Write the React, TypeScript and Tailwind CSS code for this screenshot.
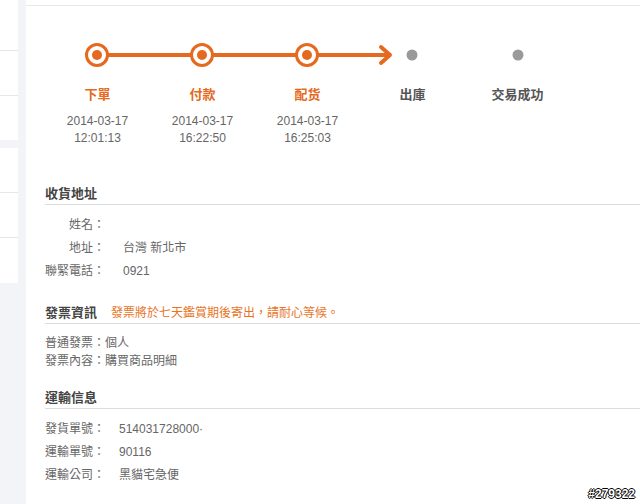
const ORANGE = "#e5691e";

const steps = [
  { label: "下單", date: "2014-03-17", time: "12:01:13", done: true },
  { label: "付款", date: "2014-03-17", time: "16:22:50", done: true },
  { label: "配货", date: "2014-03-17", time: "16:25:03", done: true },
  { label: "出庫", done: false },
  { label: "交易成功", done: false },
];

const address = [
  { k: "姓名：", v: "" },
  { k: "地址：", v: "台灣 新北市" },
  { k: "聯緊電話：", v: "0921" },
];

const shipping = [
  { k: "發貨單號：", v: "514031728000·" },
  { k: "運輸單號：", v: "90116" },
  { k: "運輸公司：", v: "黑貓宅急便" },
];

function Track() {
  return (
    <svg width="540" height="26" viewBox="0 0 540 26" className="block">
      <line x1="52" y1="13" x2="343" y2="13" stroke={ORANGE} strokeWidth="4" />
      <polyline
        points="336,5 345,13 336,21"
        fill="none"
        stroke={ORANGE}
        strokeWidth="4"
        strokeLinecap="round"
        strokeLinejoin="round"
      />
      {[52, 157, 262].map((cx) => (
        <g key={cx}>
          <circle cx={cx} cy="13" r="10.5" fill="#fff" stroke={ORANGE} strokeWidth="3" />
          <circle cx={cx} cy="13" r="5" fill={ORANGE} />
        </g>
      ))}
      {[367, 473].map((cx) => (
        <circle key={cx} cx={cx} cy="13" r="5.5" fill="#9a9a9a" />
      ))}
    </svg>
  );
}

function Heading({ title, note }: { title: string; note?: string }) {
  return (
    <div className="flex items-center gap-[14px] border-b border-[#dcdcdc] pb-[1px] leading-[18px]">
      <span className="text-[13px] font-bold text-[#444]">{title}</span>
      {note && <span className="text-[12px] text-[#e8741f]">{note}</span>}
    </div>
  );
}

export default function App() {
  return (
    <div
      className="relative flex h-[504px] w-[640px] overflow-hidden bg-[#f3f4f8]"
      style={{ fontFamily: '"Liberation Sans", "Noto Sans CJK TC", sans-serif' }}
    >
      <aside className="flex w-[18px] flex-col">
        <div className="flex flex-col bg-white">
          <div className="h-[51px] border-b border-[#e6e7ec]" />
          <div className="h-[45px] border-b border-[#e6e7ec]" />
          <div className="h-[44px]" />
        </div>
        <div className="h-[8px]" />
        <div className="flex flex-col bg-white">
          <div className="h-[45px] border-b border-[#e6e7ec]" />
          <div className="h-[45px] border-b border-[#e6e7ec]" />
          <div className="h-[45px]" />
        </div>
      </aside>

      <main className="ml-[8px] flex-1 bg-white pt-[5px]">
        <div className="h-full border-t border-[#e8e8e8] pl-[19px]">
          <div className="pt-[36px]">
            <Track />
          </div>
          <div className="mt-[18px] grid w-[525px] grid-cols-5 text-center">
            {steps.map((s) => (
              <div key={s.label} className="flex flex-col items-center">
                <span
                  className={`text-[13px] font-bold leading-[18px] ${
                    s.done ? "text-[#e5691e]" : "text-[#555]"
                  }`}
                >
                  {s.label}
                </span>
                {s.date && (
                  <div className="mt-[9px] text-[12px] leading-[17px] text-[#666]">
                    <div>{s.date}</div>
                    <div>{s.time}</div>
                  </div>
                )}
              </div>
            ))}
          </div>

          <section className="mt-[38px]">
            <Heading title="收貨地址" />
            <div className="mt-[11px] flex flex-col gap-[5px]">
              {address.map((r) => (
                <div key={r.k} className="flex h-[18px] items-center text-[12px] text-[#666]">
                  <span className="w-[60px] text-right">{r.k}</span>
                  <span className="ml-[18px]">{r.v}</span>
                </div>
              ))}
            </div>
          </section>

          <section className="mt-[24px]">
            <Heading title="發票資訊" note="發票將於七天鑑賞期後寄出，請耐心等候。" />
            <div className="mt-[10px] text-[12px] leading-[18px] text-[#666]">
              <div>普通發票：個人</div>
              <div>發票內容：購買商品明細</div>
            </div>
          </section>

          <section className="mt-[19px]">
            <Heading title="運輸信息" />
            <div className="mt-[11px] flex flex-col gap-[5px]">
              {shipping.map((r) => (
                <div key={r.k} className="flex h-[18px] items-center text-[12px] text-[#666]">
                  <span className="w-[74px]">{r.k}</span>
                  <span>{r.v}</span>
                </div>
              ))}
            </div>
          </section>
        </div>
      </main>

      <span className="absolute bottom-[1px] right-[5px] text-[12px] font-bold text-white [text-shadow:-1px_0_#000,1px_0_#000,0_-1px_#000,0_1px_#000]">
        #279322
      </span>
    </div>
  );
}
